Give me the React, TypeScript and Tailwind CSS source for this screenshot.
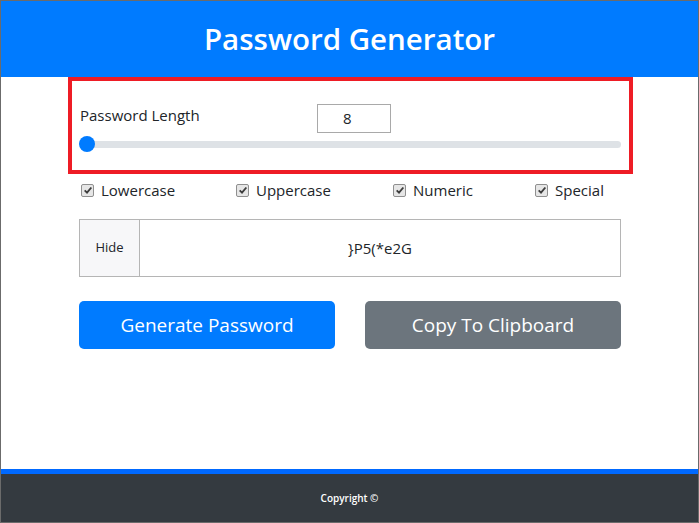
import { useState } from 'react';

function Check({ label, checked, onToggle }: { label: string; checked: boolean; onToggle: () => void }) {
  return (
    <label className="flex items-center gap-[7px] cursor-pointer" onClick={onToggle}>
      <span className="w-[13px] h-[13px] rounded-[2px] border border-[#8f8f8f] bg-[#e6e6e6] flex items-center justify-center">
        {checked && (
          <svg viewBox="0 0 12 12" className="w-[10px] h-[10px]">
            <path d="M2 6.5 L4.8 9.2 L10 3" fill="none" stroke="#3c3c3c" strokeWidth="2.2" />
          </svg>
        )}
      </span>
      <span className="text-[15px] text-[#212529]">{label}</span>
    </label>
  );
}

export default function App() {
  const [length] = useState(8);
  const [opts, setOpts] = useState({ lower: true, upper: true, numeric: true, special: true });

  const toggle = (k: keyof typeof opts) => setOpts({ ...opts, [k]: !opts[k] });

  return (
    <div
      className="w-[699px] h-[523px] border border-[#6b6b6b] bg-white flex flex-col"
      style={{ fontFamily: '"Open Sans", "Noto Sans", sans-serif' }}
    >
      {/* Header */}
      <div className="h-[76px] bg-[#007bff] flex items-center justify-center">
        <h1 className="text-white text-[29.5px] font-semibold pt-[1px]">Password Generator</h1>
      </div>

      {/* Length */}
      <div className="ml-[67px] w-[565px] h-[97px] border-4 border-[#ee1c25] px-2">
        <div className="flex items-start pt-[23px]">
          <span className="w-[237px] text-[15px] text-[#212529] leading-[22px]">Password Length</span>
          <div className="w-[74px] h-[29px] border border-[#a9a9a9] flex items-center pl-[25px] text-[15px] text-[#212529]">
            {length}
          </div>
        </div>
        <div className="relative h-[16px] mt-[3px] flex items-center">
          <div className="w-full h-[7px] rounded-full bg-[#dee2e6]" />
          <div className="absolute -left-[1px] top-0 w-[16px] h-[16px] rounded-full bg-[#007bff]" />
        </div>
      </div>

      {/* Options */}
      <div className="ml-[80px] mt-[5px] h-[22px] grid grid-cols-[155px_157px_142px_1fr] items-center">
        <Check label="Lowercase" checked={opts.lower} onToggle={() => toggle('lower')} />
        <Check label="Uppercase" checked={opts.upper} onToggle={() => toggle('upper')} />
        <Check label="Numeric" checked={opts.numeric} onToggle={() => toggle('numeric')} />
        <Check label="Special" checked={opts.special} onToggle={() => toggle('special')} />
      </div>

      {/* Output */}
      <div className="ml-[78px] w-[542px] mt-[18px] h-[58px] border border-[#b5b5b5] flex">
        <div className="w-[60px] bg-[#f7f7f9] border-r border-[#b5b5b5] flex items-center justify-center text-[13px] text-[#212529]">
          Hide
        </div>
        <div className="flex-1 flex items-center justify-center text-[15px] text-[#212529]">{'}P5(*e2G'}</div>
      </div>

      {/* Actions */}
      <div className="ml-[78px] w-[542px] mt-[24px] flex gap-[30px]">
        <button className="w-[256px] h-[48px] rounded-[5px] bg-[#007bff] text-white text-[19px]">Generate Password</button>
        <button className="w-[256px] h-[48px] rounded-[5px] bg-[#6c757d] text-white text-[19px]">Copy To Clipboard</button>
      </div>

      {/* Footer */}
      <div className="mt-auto border-t-[5px] border-[#0069ff] h-[53px] bg-[#343a40] flex items-center justify-center">
        <span className="text-white text-[10px] font-semibold">Copyright ©</span>
      </div>
    </div>
  );
}
